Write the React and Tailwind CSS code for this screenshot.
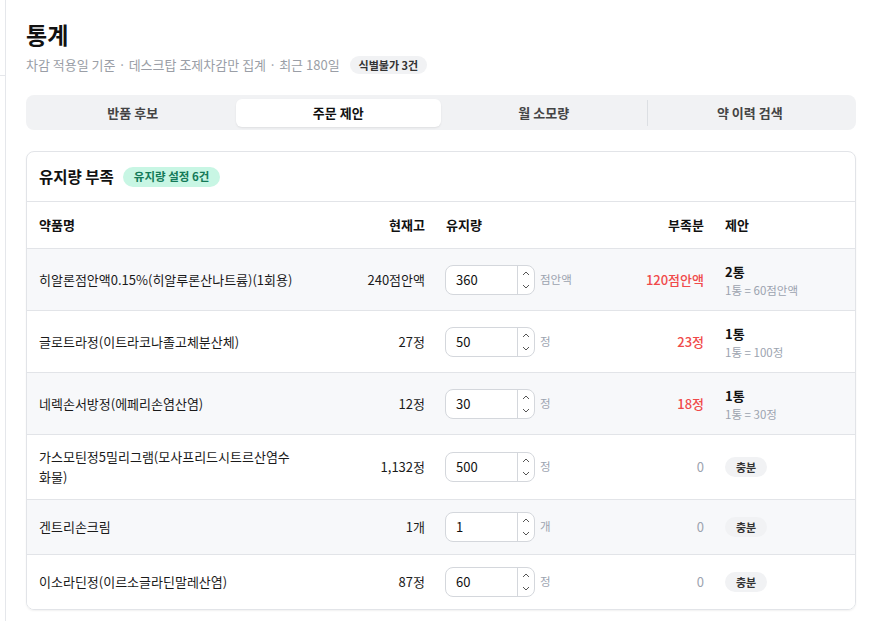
import React from "react";

const rows = [
  { name: ["히알론점안액0.15%(히알루론산나트륨)(1회용)"], stock: "240점안액", keep: "360", unit: "점안액", short: "120점안액", red: true, sug: "2통", sub: "1통 = 60점안액" },
  { name: ["글로트라정(이트라코나졸고체분산체)"], stock: "27정", keep: "50", unit: "정", short: "23정", red: true, sug: "1통", sub: "1통 = 100정" },
  { name: ["네렉손서방정(에페리손염산염)"], stock: "12정", keep: "30", unit: "정", short: "18정", red: true, sug: "1통", sub: "1통 = 30정" },
  { name: ["가스모틴정5밀리그램(모사프리드시트르산염수", "화물)"], stock: "1,132정", keep: "500", unit: "정", short: "0", red: false },
  { name: ["겐트리손크림"], stock: "1개", keep: "1", unit: "개", short: "0", red: false },
  { name: ["이소라딘정(이르소글라딘말레산염)"], stock: "87정", keep: "60", unit: "정", short: "0", red: false },
];

const font = { fontFamily: '"Noto Sans CJK KR", "Noto Sans", sans-serif' };

function Stepper({ value }) {
  return (
    <div className="flex h-[30px] w-[90px] overflow-hidden rounded-lg border border-[#d4d7dc] bg-white">
      <div className="flex flex-1 items-center pl-[10px] text-[13px] text-[#111]">{value}</div>
      <div className="flex w-[17px] flex-col items-center justify-between border-l border-[#d4d7dc] py-[5px]">
        <svg width="8" height="5" viewBox="0 0 8 5" fill="none">
          <polyline points="1,4 4,1 7,4" stroke="#555" strokeWidth="1" />
        </svg>
        <svg width="8" height="5" viewBox="0 0 8 5" fill="none">
          <polyline points="1,1 4,4 7,1" stroke="#555" strokeWidth="1" />
        </svg>
      </div>
    </div>
  );
}

const gridCols = "grid grid-cols-[283px_127px_170px_109px_1fr]";

export default function App() {
  const tabs = ["반품 후보", "주문 제안", "월 소모량", "약 이력 검색"];
  return (
    <div className="flex min-h-[621px] bg-white" style={font}>
      <aside className="w-[6px] shrink-0 border-r border-[#e5e7eb]">
        <div className="h-[76px] border-b border-[#e5e7eb]" />
      </aside>
      <main className="flex-1 px-5 pt-[18px]">
        <h1 className="text-[23px] font-bold leading-[32px] text-[#111]">통계</h1>
        <div className="mt-[5px] flex items-center gap-[10px]">
          <span className="text-[13px] leading-5 text-[#9a9ea6]">차감 적용일 기준 · 데스크탑 조제차감만 집계 · 최근 180일</span>
          <span className="flex h-[18px] items-center rounded-full bg-[#f1f2f4] px-[9px] text-[11px] font-bold text-[#333]">식별불가 3건</span>
        </div>

        <div className="mt-5 flex h-[35px] items-center rounded-lg bg-[#f1f2f4] p-1">
          {tabs.map((t, i) => (
            <div key={t} className="flex h-full flex-1 items-center">
              {i === 3 && <div className="h-[26px] w-px bg-[#dcdfe3]" />}
              <div
                className={
                  i === 1
                    ? "flex h-[28px] flex-1 items-center justify-center rounded-md bg-white text-[13px] font-bold text-[#111] shadow-[0_1px_2px_rgba(0,0,0,0.08)]"
                    : "flex h-[28px] flex-1 items-center justify-center text-[13px] font-semibold text-[#444]"
                }
              >
                {t}
              </div>
            </div>
          ))}
        </div>

        <div className="mt-[21px] overflow-hidden rounded-lg border border-[#e2e4e8] shadow-[0_1px_2px_rgba(0,0,0,0.06)]">
          <div className="flex h-[50px] items-center gap-[9px] border-b border-[#e2e4e8] px-3">
            <span className="text-[15.5px] font-bold text-[#111]">유지량 부족</span>
            <span className="flex h-[20px] items-center rounded-full bg-[#c8f6e4] px-[11px] text-[11.5px] font-bold text-[#147a58]">유지량 설정 6건</span>
          </div>

          <div className={`${gridCols} h-[46px] items-center text-[13px] font-bold text-[#111]`}>
            <div className="px-3">약품명</div>
            <div className="px-3 text-right">현재고</div>
            <div className="pl-[9px]">유지량</div>
            <div className="px-3 text-right">부족분</div>
            <div className="pl-[9px]">제안</div>
          </div>

          {rows.map((r, i) => (
            <div
              key={i}
              className={`${gridCols} items-center border-t border-[#e2e4e8] py-3 text-[13px] text-[#1a1a1a] ${i % 2 === 0 ? "bg-[#f7f8fa]" : "bg-white"}`}
            >
              <div className="px-3 leading-5">
                {r.name.map((l, k) => (
                  <div key={k} className="whitespace-nowrap">{l}</div>
                ))}
              </div>
              <div className="px-3 text-right">{r.stock}</div>
              <div className="flex items-center gap-[5px] pl-2">
                <Stepper value={r.keep} />
                <span className="text-[11.5px] text-[#9ca3af]">{r.unit}</span>
              </div>
              <div className={`px-3 text-right ${r.red ? "font-medium text-[#f04a4a]" : "text-[#9ca3af]"}`}>{r.short}</div>
              <div className="pl-[9px]">
                {r.sug ? (
                  <div className="flex flex-col">
                    <span className="text-[13px] font-bold leading-[21px] text-[#111]">{r.sug}</span>
                    <span className="text-[11.5px] leading-4 text-[#9ca3af]">{r.sub}</span>
                  </div>
                ) : (
                  <span className="inline-flex h-[20px] items-center rounded-full bg-[#f1f2f4] px-[11px] text-[11px] font-bold text-[#333]">충분</span>
                )}
              </div>
            </div>
          ))}
        </div>
      </main>
    </div>
  );
}
